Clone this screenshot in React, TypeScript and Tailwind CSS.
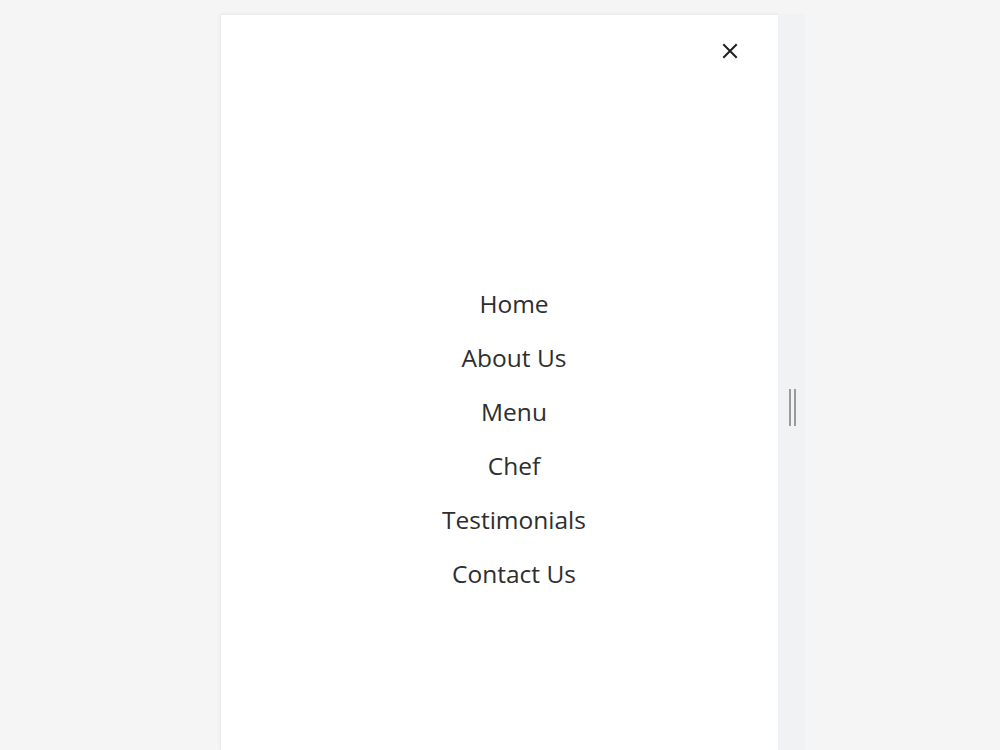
import React from "react";

const links = ["Home", "About Us", "Menu", "Chef", "Testimonials", "Contact Us"];

export default function App() {
  return (
    <div
      className="w-[1000px] h-[750px] overflow-hidden bg-[#f5f5f5] flex pl-[220px] pt-[14px]"
      style={{ fontFamily: '"Open Sans", "Noto Sans", sans-serif' }}
    >
      {/* Slide-out navigation drawer */}
      <div className="w-[558px] h-[736px] bg-white border-l border-t border-[#ececec] shadow-[0_0_3px_rgba(0,0,0,0.06)] flex flex-col">
        <div className="flex justify-end pt-[28px] pr-[40px]">
          <button aria-label="Close menu" className="w-[16px] h-[16px] flex items-center justify-center">
            <svg width="16" height="16" viewBox="0 0 16 16" fill="none">
              <path d="M2 2L14 14M14 2L2 14" stroke="#1f1f1f" strokeWidth="2" strokeLinecap="square" />
            </svg>
          </button>
        </div>
        <nav className="flex flex-col items-center pl-[29px] pt-[227px] gap-[18px]">
          {links.map((l) => (
            <a key={l} className="text-[24.5px] leading-[36px] text-[#2e2e2e]">
              {l}
            </a>
          ))}
        </nav>
      </div>
      {/* Resize gutter with grip */}
      <div className="w-[27px] h-[736px] bg-[#f1f2f4] flex items-center justify-center">
        <div className="flex gap-[3px] mt-[50px] ml-[2px]">
          <div className="w-[2px] h-[37px] bg-[#9a9a9a]" />
          <div className="w-[2px] h-[37px] bg-[#9a9a9a]" />
        </div>
      </div>
    </div>
  );
}
